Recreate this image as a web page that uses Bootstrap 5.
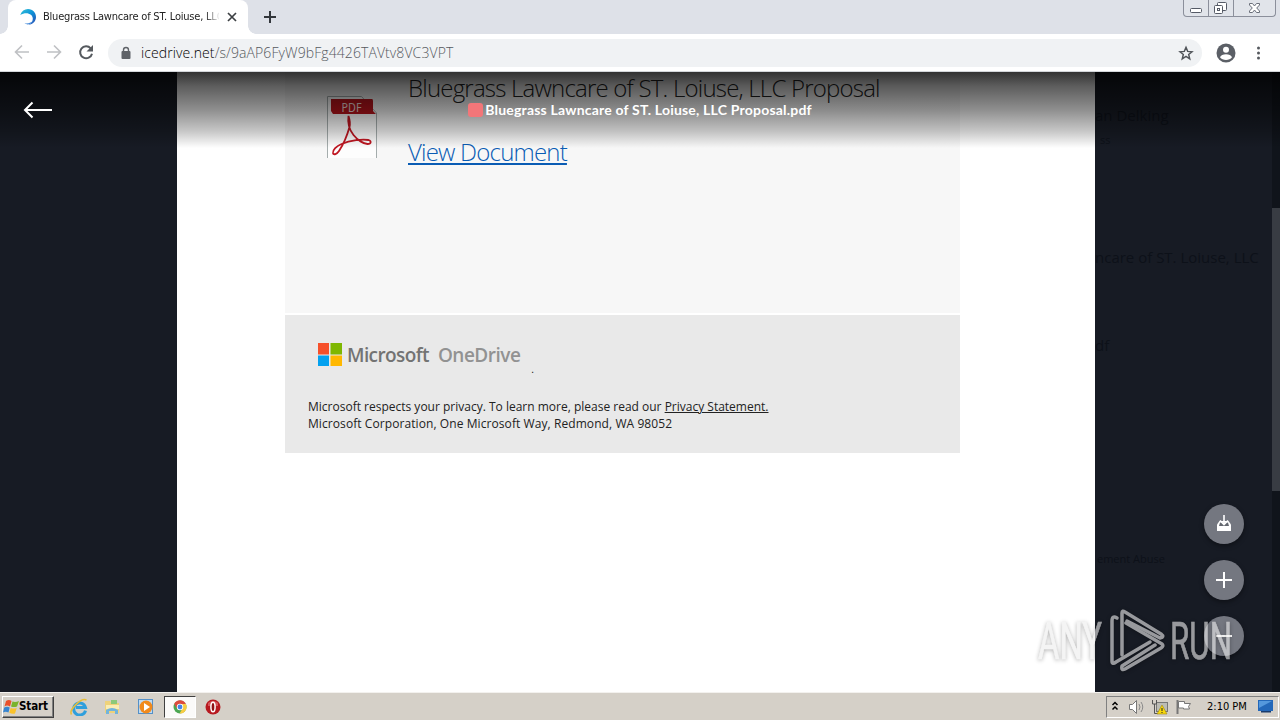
<!DOCTYPE html>
<html lang="en">
<head>
    <meta charset="UTF-8">
    <meta name="viewport" content="width=device-width, initial-scale=1.0">
    <title>Bluegrass Lawncare of ST. Loiuse, LLC Proposal.pdf</title>
    <link href="https://cdn.jsdelivr.net/npm/bootstrap@5.3.0/dist/css/bootstrap.min.css" rel="stylesheet">
    <script src="https://cdn.jsdelivr.net/npm/bootstrap@5.3.0/dist/js/bootstrap.bundle.min.js"></script>
    <style>
        body { width: 1280px; height: 720px; font-family: "Open Sans", sans-serif; color: #222; }
        svg { display: block; flex: none; }

        /* Browser window */
        .tab-strip { height: 34px; background: #dee1e8; padding-left: 8px; }
        .browser-tab { position: relative; width: 240px; height: 34px; padding: 0 11px 0 12px; background: #fff; border-radius: 8px 8px 0 0; }
        .browser-tab::before, .browser-tab::after { content: ""; position: absolute; bottom: 0; width: 8px; height: 8px; }
        .browser-tab::before { left: -8px; background: radial-gradient(circle at 0 0, #dee1e8 7.5px, #fff 8px); }
        .browser-tab::after { right: -8px; background: radial-gradient(circle at 100% 0, #dee1e8 7.5px, #fff 8px); }
        .tab-title { width: 176px; margin-left: 7px; padding-top: 1px; overflow: hidden; font-family: "DejaVu Sans Condensed", "DejaVu Sans", sans-serif; font-stretch: condensed; font-size: 11px; letter-spacing: -.21px; -webkit-mask-image: linear-gradient(90deg, #000 162px, transparent 177px); }
        .new-tab { margin: 11px 0 0 16px; }
        .win-controls { width: 93px; height: 17px; margin-right: 4px; border: 1px solid #8b8f9b; border-top: 0; border-radius: 0 0 4px 4px; background: #e1e4ea; }
        .win-controls > div { width: 25px; height: 16px; border-right: 1px solid #8b8f9b; }
        .win-controls > div:last-child { width: 41px; border: 0; }
        .toolbar { height: 38px; background: #fff; border-bottom: 1px solid #d3d6da; }
        .nav-icons { margin-top: -1px; }
        .profile-icon { margin-left: 14px; }
        .menu-icon { margin-left: 20px; }
        .address-bar { width: 1094px; height: 28px; margin-left: 14px; border-radius: 14px; background: #f0f2f4; padding: 0 8px 0 11px; }
        .address { margin: -1px 0 0 8px; font-size: 14px; font-weight: 300; letter-spacing: .09px; color: #55595e; }
        .address span { color: #000; }

        /* Viewer */
        .viewer { height: 620px; background: #171b24; }
        .page-sheet { width: 918px; margin-left: 177px; padding-left: 108px; background: #fff; }
        .mail-body { width: 675px; height: 241px; background: #f7f7f7; padding-left: 42px; }
        .doc-text { margin-left: 28px; }
        .doc-heading, .doc-link { font-size: 24px; font-weight: 300; line-height: 32px; letter-spacing: -.79px; }
        .doc-heading { color: #222; margin-bottom: 32px; }
        .doc-link { color: #0a5cb4; text-decoration: underline; text-decoration-thickness: 1.5px; text-underline-offset: 2px; }
        .mail-footer { width: 675px; height: 138px; margin-top: 2px; background: #e9e9e9; padding: 28px 23px 0; }
        .brand { height: 24px; font-size: 19px; font-weight: 600; color: #737373; line-height: 24px; letter-spacing: -.6px; }
        .brand-name { margin-left: 5px; }
        .brand-product { color: #929292; margin-left: 9px; letter-spacing: -.5px; }
        .brand-dot { margin: 0 0 -9px 11px; font-size: 8px; line-height: 12px; color: #000; }
        .legal { margin-top: 31px; font-size: 12px; line-height: 17px; color: #222; letter-spacing: 0; }
        .legal-address { letter-spacing: .08px; }
        .scroll-track { width: 8px; background: #10141b; padding-top: 136px; }
        .scroll-thumb { height: 283px; background: #383c43; }

        .ghost { left: 1095px; top: 0; width: 177px; height: 620px; overflow: hidden; font-size: 15px; color: #0d1119; }
        .ghost div { position: absolute; white-space: nowrap; line-height: 20px; }
        .shade { height: 76px; background: linear-gradient(rgba(0, 0, 0, .8), rgba(0, 0, 0, .64) 18%, rgba(0, 0, 0, .44) 50%, rgba(0, 0, 0, .22) 78%, rgba(0, 0, 0, 0)); }
        .file-name { top: 28px; height: 20px; font-family: Lato, sans-serif; font-size: 14px; font-weight: 700; line-height: 20px; letter-spacing: .2px; color: #fff; }
        .file-dot { width: 15px; height: 14px; border-radius: 3px; background: #f37679; margin-right: 2px; }
        .back-arrow { left: 23px; top: 29px; }
        .fab-stack { right: 36px; top: 432px; }
        .fab { width: 40px; height: 40px; border-radius: 50%; background: #747780; box-shadow: 0 2px 5px rgba(0, 0, 0, .4); }
        .watermark { left: 1030px; top: 529px; opacity: .6; filter: drop-shadow(0 1px 2px rgba(0, 0, 0, .5)); }

        /* Taskbar */
        .taskbar { height: 28px; background: #d5d0c8; border-top: 1px solid #f3f1ee; font-family: "DejaVu Sans Condensed", "DejaVu Sans", sans-serif; font-stretch: condensed; }
        .start-btn { width: 52px; height: 22px; margin-left: 2px; border: 1px solid; border-color: #fff #404040 #404040 #fff; box-shadow: inset -1px -1px #808080; font-size: 11.5px; font-weight: 700; letter-spacing: -.1px; color: #000; }
        .start-btn span { margin-top: 1px; }
        .task-active { width: 32px; height: 22px; margin-left: 9px; border: 1px solid; border-color: #404040 #fff #fff #404040; background: #fbfaf9; }
        .task-ie { margin-left: 16px; }
        .task-folder, .task-media { margin-left: 15px; }
        .task-media { margin-left: 16px; }
        .task-opera { margin-left: 9px; }
        .tray { width: 173px; height: 22px; margin-right: 1px; padding-left: 4px; border: 1px solid; border-color: #808080 #fff #fff #808080; }
        .tray-icon { margin-left: 6px; }
        .tray-clock { width: 41px; margin: 2px 0 0 14px; font-size: 11px; letter-spacing: 0; color: #000; }
        .tray-screen { margin-left: 10px; }
    </style>
</head>
<body class="overflow-hidden">
    <!-- Tabs -->
    <div class="tab-strip d-flex">
        <div class="browser-tab d-flex align-items-center">
            <svg width="16" height="16" viewBox="0 0 16 16">
                <defs><linearGradient id="ice" x1="0" y1="0" x2=".8" y2="1"><stop offset="0" stop-color="#35c4d8"/><stop offset=".5" stop-color="#0e93d8"/><stop offset="1" stop-color="#2452b5"/></linearGradient></defs>
                <path d="M.2 6C1.500 2 4.500 0 8 0c5 0 8 4 8 8 0 4-3 7.500-7.500 7.700 2.500-1 4.300-3.200 4.300-6C12.800 5.500 7 2.300.2 6z" fill="url(#ice)"/>
                <path d="M4.500 14.300c4 .6 7-.8 9.500-3.300-1.500 3.500-6 6-9.500 3.300z" fill="#3f86d8"/>
            </svg>
            <div class="tab-title text-nowrap">Bluegrass Lawncare of ST. Loiuse, LLC</div>
            <svg width="10" height="10" viewBox="0 0 10 10" class="ms-auto"><path d="M1 1l8 8M9 1L1 9" stroke="#3c4043" stroke-width="1.700"/></svg>
        </div>
        <svg class="new-tab" width="12" height="12" viewBox="0 0 12 12"><path d="M6 0v12M0 6h12" stroke="#33373c" stroke-width="2"/></svg>
        <div class="win-controls d-flex ms-auto">
            <div><svg width="24" height="16" viewBox="0 0 24 16"><rect x="6.500" y="8.500" width="11" height="4" rx="1" fill="#fff" stroke="#555a66"/></svg></div>
            <div><svg width="24" height="16" viewBox="0 0 24 16" fill="#fff" stroke="#555a66"><rect x="8.500" y="2.500" width="9" height="8" rx="1"/><rect x="5.500" y="5.500" width="8" height="8" rx="1"/><rect x="8.500" y="8.500" width="2" height="2"/></svg></div>
            <div><svg width="41" height="16" viewBox="0 0 41 16"><path d="M15.500 3.500h3l2 2.500 2-2.500h3V5l-2.800 3 2.800 3v1.500h-3l-2-2.500-2 2.500h-3V11l2.800-3-2.800-3z" fill="#fff" stroke="#6a6f7a"/></svg></div>
        </div>
    </div>

    <!-- Address bar -->
    <div class="toolbar d-flex align-items-center">
        <svg class="nav-icons" width="94" height="16" viewBox="0 0 94 16" fill="none">
            <path d="M29 8H16M22 1.500L15.500 8l6.500 6.500M47 8h13M54 1.500L60.500 8 54 14.500" stroke="#bfc1c4" stroke-width="1.600"/>
            <path d="M90.700 4.300A6 6 0 1 0 92 9.700" stroke="#55595e" stroke-width="2"/>
            <path d="M93 1v6.500h-6.500z" fill="#55595e"/>
        </svg>
        <div class="address-bar d-flex align-items-center">
            <svg width="14" height="14" viewBox="0 0 14 14"><rect x="2.500" y="5" width="9" height="8" rx="1" fill="#5f6368"/><path d="M4.500 6V4a2.500 2.500 0 0 1 5 0v2" fill="none" stroke="#5f6368" stroke-width="1.400"/></svg>
            <div class="address text-nowrap"><span>icedrive.net</span>/s/9aAP6FyW9bFg4426TAVtv8VC3VPT</div>
            <svg width="16" height="16" viewBox="0 0 24 24" class="ms-auto"><path d="M12 3.500l2.500 6.100 6.500.5-5 4.200 1.600 6.400-5.600-3.500-5.600 3.500L8 14.300l-5-4.200 6.500-.5z" fill="none" stroke="#505459" stroke-width="2.200"/></svg>
        </div>
        <svg class="profile-icon" width="20" height="20" viewBox="0 0 20 20"><circle cx="10" cy="10" r="9.500" fill="#5b5f66"/><circle cx="10" cy="6.700" r="3" fill="#fff"/><path d="M4 14.300c1.200-4 10.800-4 12 0-2.500 3.500-9.500 3.500-12 0z" fill="#fff"/></svg>
        <svg class="menu-icon" width="4" height="14" viewBox="0 0 4 14" fill="#55595e"><circle cx="2.500" cy="2" r="1.500"/><circle cx="2.500" cy="7" r="1.500"/><circle cx="2.500" cy="12" r="1.500"/></svg>
    </div>

    <!-- Document viewer -->
    <main class="viewer position-relative d-flex overflow-hidden">
        <div class="page-sheet">
            <div class="mail-body d-flex">
                <svg width="53" height="87" viewBox="0 0 53 87">
                    <path d="M.5 86V24.500h34L49.500 41v45" fill="#fdfdfd" stroke="#a5adad"/>
                    <path d="M4 27h41q1 0 1 2v10l3 3h-3L6 42l-2-3z" fill="#b9141c"/>
                    <text x="14.500" y="39.500" font-family="Noto Sans" font-size="12" textLength="20" lengthAdjust="spacingAndGlyphs" fill="#f3dcdc">PDF</text>
                    <g fill="none" stroke="#c01722" stroke-width="1.800" stroke-linecap="round">
                        <path d="M21.500 44c-1 7 1 14 5 19 4 5 10 9 14 9 4 0 4-3 1-4-6-1-18 0-27 4-5 2-9 6-8.500 9 .5 2.500 4 1 6-2 4-6 8-15 10.500-24 1-4 0-8-1-11z"/>
                    </g>
                </svg>
                <div class="doc-text">
                    <div class="doc-heading text-nowrap">Bluegrass Lawncare of ST. Loiuse, LLC Proposal</div>
                    <a class="doc-link" href="#">View Document</a>
                </div>
            </div>
            <div class="mail-footer">
                <div class="brand d-flex align-items-center">
                    <svg width="34" height="24" viewBox="0 0 34 24"><path d="M10 0h11v11.500H10z" fill="#f6502a"/><path d="M22.500 0H34v11.500H22.500z" fill="#7eb701"/><path d="M10 12.500h11V23H10z" fill="#04a1ef"/><path d="M22.500 12.500H34V23H22.500z" fill="#ffb801"/></svg>
                    <span class="brand-name">Microsoft</span><span class="brand-product">OneDrive</span><span class="brand-dot align-self-end">.</span>
                </div>
                <div class="legal text-nowrap">Microsoft respects your privacy. To learn more, please read our <u>Privacy Statement.</u><br><span class="legal-address">Microsoft Corporation, One Microsoft Way, Redmond, WA 98052</span></div>
            </div>
        </div>
        <div class="scroll-track ms-auto"><div class="scroll-thumb"></div></div>

        <!-- Dimmed listing under the viewer -->
        <div class="ghost position-absolute">
            <div style="left:0;top:33px">an Delking</div>
            <div style="left:5px;top:58px;font-size:11px">ss</div>
            <div style="left:0;top:175px">ncare of ST. Loiuse, LLC</div>
            <div style="left:0;top:263px">df</div>
            <div style="left:2px;top:477px;font-size:11px">ement Abuse</div>
        </div>

        <div class="shade position-absolute top-0 start-0 w-100"></div>
        <svg class="back-arrow position-absolute" width="30" height="18" viewBox="0 0 30 18"><path d="M29 9H2M9.500 1.500L2 9l7.500 7.500" fill="none" stroke="#fff" stroke-width="2"/></svg>
        <div class="file-name position-absolute start-0 w-100 d-flex justify-content-center align-items-center text-nowrap"><div class="file-dot"></div>Bluegrass Lawncare of ST. Loiuse, LLC Proposal.pdf</div>

        <div class="fab-stack position-absolute d-flex flex-column gap-3">
            <div class="fab d-flex align-items-center justify-content-center"><svg width="16" height="18" viewBox="0 0 16 18"><path d="M1 16V9.500L3.500 6h9L15 9.500V16z" fill="#fff"/><path d="M4 7.500h8l1 3.500H3z" fill="#646870"/><path d="M8 0v10M4 5.500l4 4 4-4" fill="none" stroke="#fff" stroke-width="1.600"/></svg></div>
            <div class="fab d-flex align-items-center justify-content-center"><svg width="16" height="16" viewBox="0 0 16 16"><path d="M8 0v16M0 8h16" stroke="#fff" stroke-width="2"/></svg></div>
            <div class="fab d-flex align-items-center justify-content-center"><svg width="16" height="16" viewBox="0 0 16 16"><path d="M0 8h16" stroke="#fff" stroke-width="2"/></svg></div>
        </div>

        <svg class="watermark position-absolute" width="210" height="80" viewBox="0 0 210 80" font-family="Roboto" font-size="51" fill="#eee" stroke="#eee" stroke-width=".7">
            <text x="8" y="58" textLength="64" lengthAdjust="spacingAndGlyphs">ANY</text>
            <text x="140" y="58" textLength="62" lengthAdjust="spacingAndGlyphs">RUN</text>
            <g fill="none" stroke-width="3.500" stroke-linejoin="round" stroke-linecap="round">
                <path d="M92 54V12q0-3 3-1l36 22q4 3-1 4l-33-17"/>
                <path d="M87 17q-5-3-5 3v40q0 4 4 1l34-20"/>
                <path d="M96 22l36 21q2 2-1 4L95 68q-4 2-3-3l33-21"/>
            </g>
        </svg>
    </main>

    <!-- Taskbar -->
    <footer class="taskbar d-flex align-items-center">
        <div class="start-btn d-flex align-items-center">
            <svg width="16" height="16" viewBox="0 0 16 16"><path d="M3 2q3-2 5.500 0L7 7.500Q4 5.500 1.500 7.500z" fill="#e9502b"/><path d="M9.500 2.500q3 1 6.500-.5l-2 5.500q-3 1-6 0z" fill="#7ab32d"/><path d="M1.200 8.500q3-1.500 5.500 0L5.500 13.500q-3-1.500-5.500 0z" fill="#3785d0"/><path d="M7.700 9q3 1 6 0L12 14.500q-3 .8-5.700-.8z" fill="#f9c22b"/></svg>
            <span>Start</span>
        </div>
        <svg class="task-ie" width="18" height="18" viewBox="0 0 18 18"><path d="M15.500 12.500A6 6 0 1 1 15.500 9.500H6" fill="none" stroke="#2f9fdc" stroke-width="3"/><path d="M1.500 16.500C-1.500 12 11-.5 16.500 2" fill="none" stroke="#e8bd38" stroke-width="1.500"/></svg>
        <svg class="task-folder" width="18" height="18" viewBox="0 0 18 18"><path d="M2 3h5l1 2h8v10H2z" fill="#eed27a"/><path d="M8 2h6v4H8z" fill="#8cc979"/><path d="M3 7h13v4H3z" fill="#faedb4"/><path d="M3 16v-4q6-4 12 0v4h-3v-3H6v3z" fill="#72b4dc"/></svg>
        <svg class="task-media" width="18" height="18" viewBox="0 0 18 18"><rect x="1.500" y="1.500" width="14" height="14" fill="#c0daf0" stroke="#5490c8"/><circle cx="9" cy="9" r="6.500" fill="#f18a1c"/><path d="M7 5l6 4-6 4z" fill="#fff"/></svg>
        <div class="task-active d-flex align-items-center justify-content-center"><svg width="14" height="14" viewBox="0 0 14 14"><circle cx="7" cy="7" r="6.500" fill="#4ba652"/><path d="M1.200 3.800A6.500 6.500 0 0 1 12.900 4H7L4 8.500z" fill="#dd4b3e"/><path d="M12.900 4A6.500 6.500 0 0 1 6.500 13.500L9.800 8 7 4z" fill="#f8cc42"/><circle cx="7" cy="7" r="3.200" fill="#fff"/><circle cx="7" cy="7" r="2.400" fill="#4484e8"/></svg></div>
        <svg class="task-opera" width="16" height="16" viewBox="0 0 16 16"><circle cx="8" cy="8" r="7.500" fill="#b71920"/><path d="M3 4q5-4 10 0v3H3z" fill="#d85459"/><ellipse cx="8" cy="8" rx="2.100" ry="4.800" fill="#8f1015" stroke="#fff" stroke-width="1.500"/></svg>

        <div class="tray d-flex align-items-center ms-auto">
            <svg width="8" height="12" viewBox="0 0 8 12"><path d="M1.500 4L4 1.500 6.500 4M1.500 8.500L4 6l2.500 2.500" fill="none" stroke="#000" stroke-width="1.500"/></svg>
            <svg width="18" height="16" viewBox="0 0 18 16" class="ms-2"><path d="M2.500 5.500h3l4-4v13l-4-4h-3z" fill="#fff" stroke="#777"/><path d="M12 5q2 3 0 6M14 3q3.500 5 0 10" fill="none" stroke="#8a8a8a"/></svg>
            <svg class="tray-icon" width="18" height="16" viewBox="0 0 18 16"><rect x="5.500" y="3.500" width="11" height="9" fill="#bcbcb5" stroke="#777"/><path d="M1.500 1v4h4V1M3.500 5v9.500H8" fill="none" stroke="#555"/><path d="M11 6l5 9H6z" fill="#f8d80a" stroke="#9c8510" stroke-width=".6"/><path d="M11 9v3M11 13v1" stroke="#222"/></svg>
            <svg class="tray-icon" width="18" height="16" viewBox="0 0 18 16"><path d="M2.500 1v14" stroke="#777" stroke-width="2"/><path d="M3.500 2.500h6v2h6l-2 3 1 2.500h-6v-1h-5z" fill="#fff" stroke="#777"/></svg>
            <span class="tray-clock text-nowrap">2:10 PM</span>
            <svg class="tray-screen" width="16" height="13" viewBox="0 0 16 13"><rect width="15" height="11" fill="#2468b9"/><path d="M1 1h13L1 8z" fill="#5598dc"/><path d="M3 11h10v1.500H3z" fill="#193b6c"/></svg>
        </div>
    </footer>
</body>
</html>
